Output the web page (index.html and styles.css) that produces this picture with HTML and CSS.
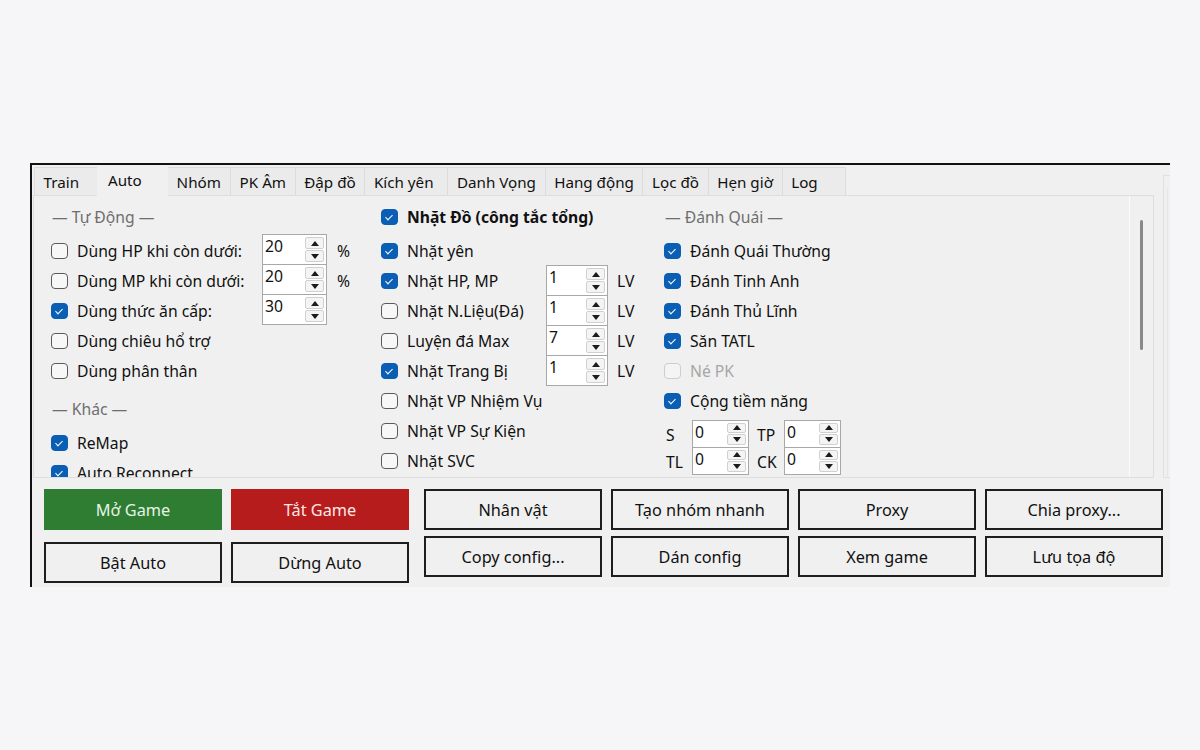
FILE: index.html
```html
<!DOCTYPE html>
<html lang="vi">
<head>
  <meta charset="UTF-8" />
  <title>Auto</title>
  <link rel="stylesheet" href="styles.css">
</head>
<body>

  <div class="window">

    <!-- Tabs -->
    <div class="tabbar">
      <div class="tab">Train</div>
      <div class="tab active">Auto</div>
      <div class="tab">Nhóm</div>
      <div class="tab">PK Âm</div>
      <div class="tab">Đập đồ</div>
      <div class="tab tab-wide">Kích yên</div>
      <div class="tab">Danh Vọng</div>
      <div class="tab">Hang động</div>
      <div class="tab">Lọc đồ</div>
      <div class="tab">Hẹn giờ</div>
      <div class="tab">Log</div>
    </div>

    <div class="body">
      <div class="panel">
        <div class="scroller">

          <!-- Column 1 -->
          <div class="col col-1">
            <div class="group-title">— Tự Động —</div>
            <div class="row">
              <label class="chk wide"><span class="box"></span>Dùng HP khi còn dưới:</label>
              <div class="spin spin-a"><span class="val">20</span><span class="btns"><i class="up"></i><i class="down"></i></span></div>
              <span class="unit">%</span>
            </div>
            <div class="row">
              <label class="chk wide"><span class="box"></span>Dùng MP khi còn dưới:</label>
              <div class="spin spin-a"><span class="val">20</span><span class="btns"><i class="up"></i><i class="down"></i></span></div>
              <span class="unit">%</span>
            </div>
            <div class="row">
              <label class="chk wide"><span class="box on"></span>Dùng thức ăn cấp:</label>
              <div class="spin spin-a"><span class="val">30</span><span class="btns"><i class="up"></i><i class="down"></i></span></div>
            </div>
            <div class="row"><label class="chk"><span class="box"></span>Dùng chiêu hổ trợ</label></div>
            <div class="row"><label class="chk"><span class="box"></span>Dùng phân thân</label></div>

            <div class="group-title second">— Khác —</div>
            <div class="row"><label class="chk"><span class="box on"></span>ReMap</label></div>
            <div class="row"><label class="chk"><span class="box on"></span>Auto Reconnect</label></div>
          </div>

          <!-- Column 2 -->
          <div class="col col-2">
            <div class="row head"><label class="chk strong"><span class="box on"></span>Nhặt Đồ (công tắc tổng)</label></div>
            <div class="row"><label class="chk"><span class="box on"></span>Nhặt yên</label></div>
            <div class="row">
              <label class="chk mid"><span class="box on"></span>Nhặt HP, MP</label>
              <div class="spin spin-b"><span class="val">1</span><span class="btns"><i class="up"></i><i class="down"></i></span></div>
              <span class="unit">LV</span>
            </div>
            <div class="row">
              <label class="chk mid"><span class="box"></span>Nhặt N.Liệu(Đá)</label>
              <div class="spin spin-b"><span class="val">1</span><span class="btns"><i class="up"></i><i class="down"></i></span></div>
              <span class="unit">LV</span>
            </div>
            <div class="row">
              <label class="chk mid"><span class="box"></span>Luyện đá Max</label>
              <div class="spin spin-b"><span class="val">7</span><span class="btns"><i class="up"></i><i class="down"></i></span></div>
              <span class="unit">LV</span>
            </div>
            <div class="row">
              <label class="chk mid"><span class="box on"></span>Nhặt Trang Bị</label>
              <div class="spin spin-b"><span class="val">1</span><span class="btns"><i class="up"></i><i class="down"></i></span></div>
              <span class="unit">LV</span>
            </div>
            <div class="row"><label class="chk"><span class="box"></span>Nhặt VP Nhiệm Vụ</label></div>
            <div class="row"><label class="chk"><span class="box"></span>Nhặt VP Sự Kiện</label></div>
            <div class="row"><label class="chk"><span class="box"></span>Nhặt SVC</label></div>
          </div>

          <!-- Column 3 -->
          <div class="col col-3">
            <div class="group-title">— Đánh Quái —</div>
            <div class="row"><label class="chk"><span class="box on"></span>Đánh Quái Thường</label></div>
            <div class="row"><label class="chk"><span class="box on"></span>Đánh Tinh Anh</label></div>
            <div class="row"><label class="chk"><span class="box on"></span>Đánh Thủ Lĩnh</label></div>
            <div class="row"><label class="chk"><span class="box on"></span>Săn TATL</label></div>
            <div class="row"><label class="chk disabled"><span class="box"></span>Né PK</label></div>
            <div class="row"><label class="chk"><span class="box on"></span>Cộng tiềm năng</label></div>

            <div class="stats">
              <span class="stat-label">S</span>
              <div class="spin spin-c"><span class="val">0</span><span class="btns"><i class="up"></i><i class="down"></i></span></div>
              <span class="stat-label">TP</span>
              <div class="spin spin-c"><span class="val">0</span><span class="btns"><i class="up"></i><i class="down"></i></span></div>
              <span class="stat-label">TL</span>
              <div class="spin spin-c"><span class="val">0</span><span class="btns"><i class="up"></i><i class="down"></i></span></div>
              <span class="stat-label">CK</span>
              <div class="spin spin-c"><span class="val">0</span><span class="btns"><i class="up"></i><i class="down"></i></span></div>
            </div>
          </div>

        </div>
        <div class="vscroll"><div class="thumb"></div></div>
      </div>
      <div class="side"></div>
    </div>

    <!-- Buttons -->
    <div class="actions">
      <div class="btn-grid left">
        <div class="btn green">Mở Game</div>
        <div class="btn red">Tắt Game</div>
        <div class="btn">Bật Auto</div>
        <div class="btn">Dừng Auto</div>
      </div>
      <div class="btn-grid right">
        <div class="btn">Nhân vật</div>
        <div class="btn">Tạo nhóm nhanh</div>
        <div class="btn">Proxy</div>
        <div class="btn">Chia proxy...</div>
        <div class="btn">Copy config...</div>
        <div class="btn">Dán config</div>
        <div class="btn">Xem game</div>
        <div class="btn">Lưu tọa độ</div>
      </div>
    </div>

  </div>

</body>
</html>
```

FILE: styles.css
```css
* {
  margin: 0;
  padding: 0;
  box-sizing: border-box;
}

body {
  background: #f6f6f8;
  font-family: "Noto Sans", "Open Sans", sans-serif;
  font-size: 15.7px;
  color: #111;
}

.window {
  margin: 163px 0 0 30px;
  width: 1140px;
  height: 424px;
  background: #f0f0f0;
  border-top: 2px solid #111;
  border-left: 2px solid #111;
}

/* tabs */
.tabbar {
  display: flex;
  align-items: flex-end;
  height: 30px;
  padding-left: 2px;
  font-size: 15.2px;
}

.tab {
  height: 28px;
  min-width: 64px;
  padding: 0 8.6px;
  display: flex;
  align-items: center;
  background: #ebebeb;
  border: 1px solid #dcdcdc;
  border-bottom: none;
  margin-right: -1px;
  white-space: nowrap;
}

.tab.tab-wide {
  min-width: 84px;
}

.tab.active {
  height: 31px;
  min-width: 71px;
  margin-bottom: -1px;
  padding: 0 10px 2px;
  background: #f0f0f0;
  border-color: #f0f0f0;
  position: relative;
  z-index: 1;
}

/* tab body */
.body {
  display: flex;
  height: 283px;
}

.panel {
  display: flex;
  width: 1121px;
  margin-left: 1px;
  border: 1px solid #dedede;
  overflow: hidden;
}

.scroller {
  flex: 1;
  display: flex;
  padding: 6px 0 0 17px;
}

.col-1 { width: 330px; }
.col-2 { width: 283px; }
.col-3 { width: 260px; }

.group-title {
  height: 30px;
  line-height: 30px;
  margin-bottom: 4px;
  color: #6e6e6e;
  padding-left: 1px;
}

.group-title.second {
  margin-top: 8px;
}

.row {
  display: flex;
  align-items: center;
  height: 30px;
}

.row.head {
  margin-bottom: 4px;
}

.chk {
  display: flex;
  align-items: center;
  gap: 9px;
  white-space: nowrap;
}

.chk.wide { width: 211px; }
.chk.mid { width: 165px; }
.chk.strong { font-weight: 700; }
.chk.disabled { color: #a6a6a6; }

.box {
  width: 17px;
  height: 16px;
  border: 1.5px solid #5a5a5a;
  border-radius: 4px;
  background: #f7f7f7;
  position: relative;
  flex-shrink: 0;
}

.chk.disabled .box {
  border-color: #cdcdcd;
  background: #f4f4f4;
}

.box.on {
  background: #0a5fb4;
  border-color: #0a5fb4;
}

.box.on::after {
  content: "";
  position: absolute;
  left: 5px;
  top: 3px;
  width: 3px;
  height: 6px;
  border-right: 1.3px solid #fff;
  border-bottom: 1.3px solid #fff;
  transform: rotate(45deg);
}

/* spin boxes */
.spin {
  display: flex;
  background: #fff;
  border: 1px solid #a8a8a8;
  flex-shrink: 0;
}

.spin-a {
  width: 65px;
  height: 31px;
  margin-top: -3px;
}

.spin-b {
  width: 62px;
  height: 31px;
  margin-top: -1px;
}

.spin-c {
  width: 57px;
  height: 28px;
}

.val {
  flex: 1;
  padding: 1px 0 0 2px;
  line-height: 20px;
}

.btns {
  width: 22px;
  display: flex;
  flex-direction: column;
  gap: 1px;
  padding: 2px 2px 2px 1px;
}

.btns i {
  flex: 1;
  display: flex;
  align-items: center;
  justify-content: center;
  background: #f4f4f4;
  border: 1px solid #d0d0d0;
  border-radius: 2px;
}

.btns i::after {
  content: "";
  border-left: 4px solid transparent;
  border-right: 4px solid transparent;
}

.btns .up::after { border-bottom: 5px solid #1b1b1b; }
.btns .down::after { border-top: 5px solid #1b1b1b; }

.unit {
  margin-left: 10px;
}

.spin-b + .unit {
  margin-left: 9px;
}

/* stats */
.stats {
  display: grid;
  grid-template-columns: 26px 57px 35px 57px;
  grid-auto-rows: 27px;
  align-items: center;
  margin-top: 4px;
  padding-left: 2px;
}

.stat-label {
  padding-top: 2px;
}

.stats .stat-label:nth-child(3),
.stats .stat-label:nth-child(7) {
  padding-left: 8px;
}

/* scrollbar */
.vscroll {
  width: 24px;
  border-left: 1px solid #fbfbfb;
  padding: 24px 0 0 10px;
}

.thumb {
  width: 3px;
  height: 130px;
  background: #898989;
  border-radius: 2px;
}

.side {
  margin: -20px 0 0 9px;
  width: 7px;
  border-left: 1px solid #e0e0e0;
  border-top: 1px solid #e0e0e0;
  border-bottom: 1px solid #e0e0e0;
  position: relative;
}

.side::after {
  content: "";
  position: absolute;
  left: 3px;
  top: 12px;
  bottom: 0;
  border-left: 1px solid #e6e6e6;
}

/* buttons */
.actions {
  display: flex;
  gap: 15px;
  padding: 11px 0 0 12px;
}

.btn-grid {
  display: grid;
  grid-template-columns: repeat(2, 178px);
  grid-auto-rows: 41px;
  column-gap: 9px;
  row-gap: 12px;
}

.btn-grid.right {
  grid-template-columns: repeat(4, 178px);
  row-gap: 6px;
}

.btn {
  display: flex;
  align-items: center;
  justify-content: center;
  border: 2px solid #1e1e1e;
  background: #f0f0f0;
  font-size: 16.3px;
}

.btn.green {
  background: #2e7d32;
  border-color: #2e7d32;
  color: #e6f4e6;
}

.btn.red {
  background: #b71c1c;
  border-color: #b71c1c;
  color: #fde8e8;
}
```
